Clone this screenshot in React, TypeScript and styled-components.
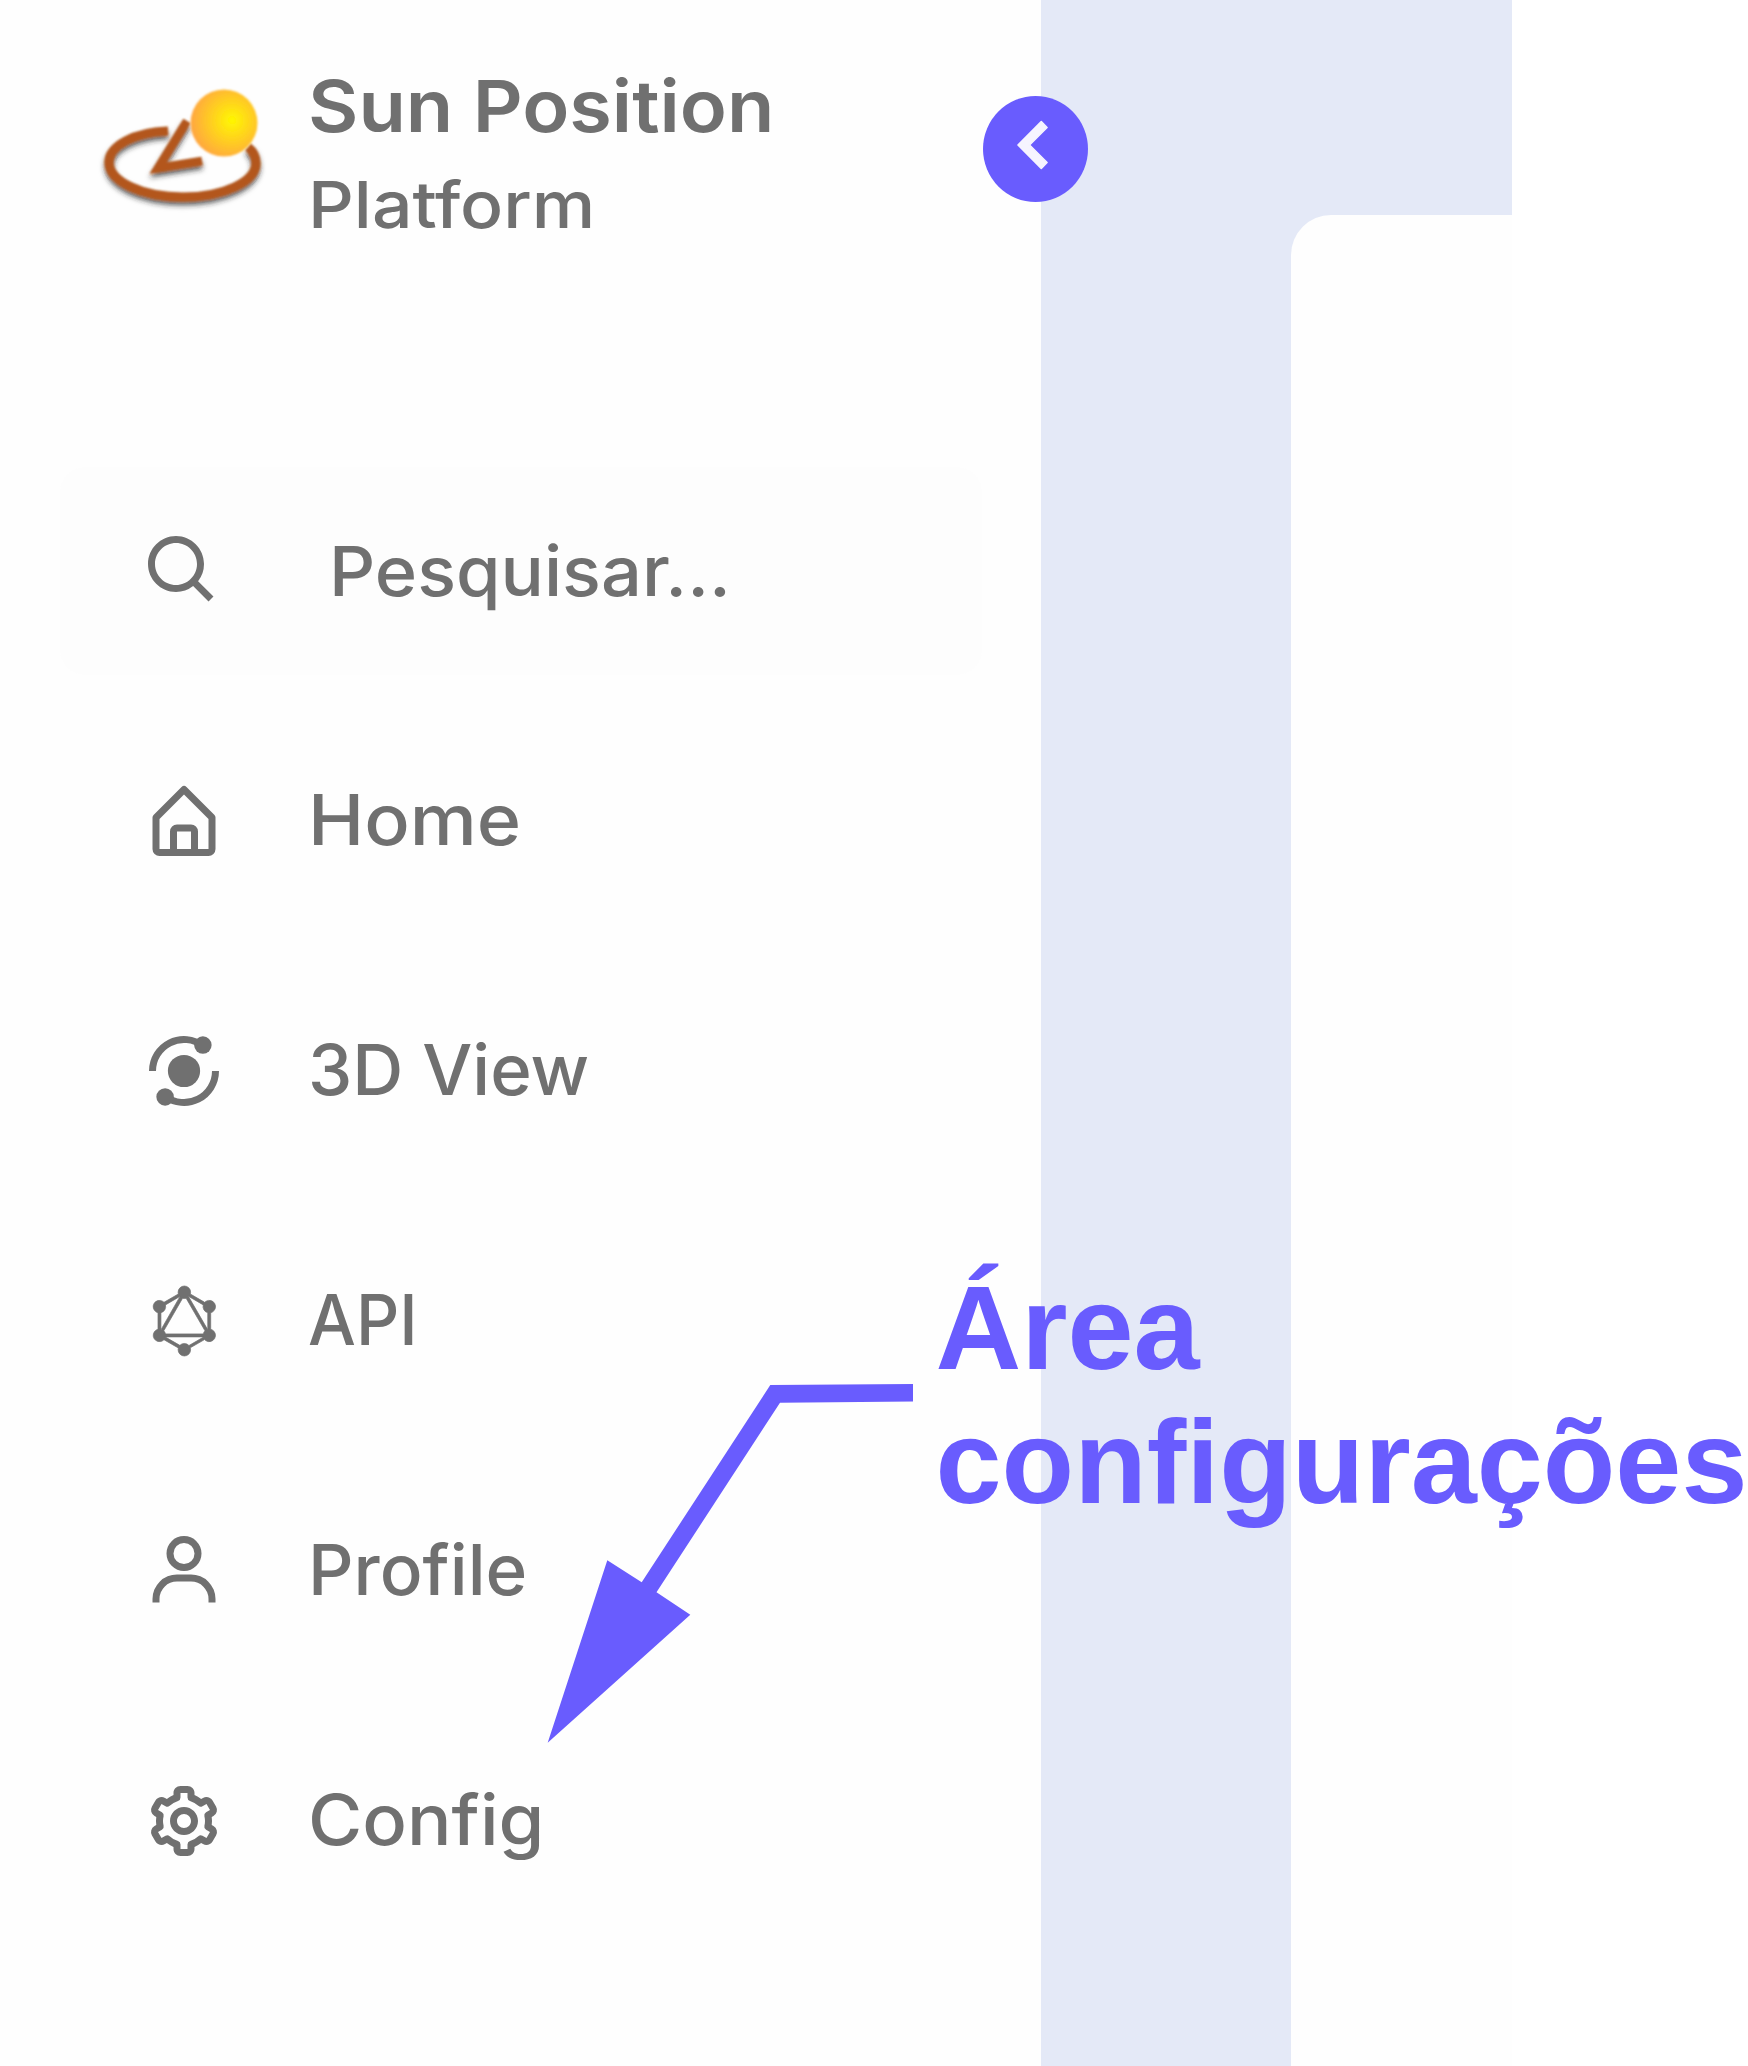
import React from "react";
import styled, { createGlobalStyle } from "styled-components";
import {
  BiChevronLeft,
  BiCog,
  BiLogoGraphql,
  BiSearch,
  BiUser,
} from "react-icons/bi";

const accent = "#695cfe";
const ink = "#707070";

const GlobalStyle = createGlobalStyle`
  * { box-sizing: border-box; }
  body { margin: 0; background: #fff; }
`;

const Page = styled.div`
  position: relative;
  display: flex;
  width: 1748px;
  height: 2066px;
  overflow: hidden;
  background: #fff;
  font-family: Inter, "Open Sans", sans-serif;
  color: ${ink};
`;

const Sidebar = styled.nav`
  position: relative;
  flex: none;
  width: 1041px;
  padding: 64px 59px 0 60px;
  background: #fefefe;
`;

const Header = styled.header`
  display: flex;
  height: 186px;
  padding-left: 40px;
`;

const Logo = styled.svg`
  flex: none;
  width: 180px;
  height: 135px;
  margin: 16px 33px 0 -5px;
`;

const Titles = styled.div`
  display: flex;
  flex-direction: column;
  gap: 15px;
`;

const Label = styled.span<{ $size: number; $stretch: number; $weight?: number }>`
  font-size: ${(p) => p.$size}px;
  font-weight: ${(p) => p.$weight ?? 500};
  line-height: 84px;
  white-space: nowrap;
  transform: scaleX(${(p) => p.$stretch});
  transform-origin: left center;
`;

const Toggle = styled.button`
  position: absolute;
  top: 96px;
  right: -47px;
  display: grid;
  place-items: center;
  width: 105px;
  height: 106px;
  padding: 0 0 8px;
  border: 0;
  border-radius: 50%;
  background: ${accent};
  color: #f6f4ff;
  z-index: 1;
`;

const Search = styled.div`
  display: flex;
  align-items: center;
  height: 208px;
  margin-top: 217px;
  padding-left: 81px;
  gap: 104px;
  border-radius: 25px;
  background: #fdfdfd;
`;

const Menu = styled.ul`
  display: flex;
  flex-direction: column;
  margin: 42px 0 0;
  padding: 0;
  list-style: none;
`;

const Item = styled.li`
  display: flex;
  align-items: center;
  height: 208px;
  margin-bottom: 42px;
  padding-left: 81.5px;
  gap: 82.5px;

  ${() => Label} {
    padding-bottom: 2px;
  }
`;

const SearchLabel = styled(Label)`
  padding-bottom: 1px;
`;

const Content = styled.main`
  display: flex;
  flex: none;
  width: 471px;
  padding: 215px 0 0 250px;
  background: #e4e9f7;
`;

const Panel = styled.section`
  flex: 1;
  border-top-left-radius: 40px;
  background: #fefefe;
`;

const Arrow = styled.svg`
  position: absolute;
  left: 540px;
  top: 1376px;
  width: 380px;
  height: 374px;
  z-index: 2;
`;

const Note = styled.p`
  position: absolute;
  left: 935.5px;
  top: 1260.5px;
  margin: 0;
  color: ${accent};
  font: 700 118.8px/134px "Liberation Sans", Arial, sans-serif;
  z-index: 2;
`;

type IconProps = { size?: number };

function HomeIcon({ size }: IconProps) {
  return (
    <svg width={size} height={size} viewBox="0 0 24 24" fill="currentColor">
      <path d="M5 22h14a2 2 0 0 0 2-2v-9a1 1 0 0 0-.29-.71l-8-8a1 1 0 0 0-1.41 0l-8 8A1 1 0 0 0 3 11v9a2 2 0 0 0 2 2zm5-2v-5h4v5zm-5-8.59 7-7 7 7V20h-3v-5a2 2 0 0 0-2-2h-4a2 2 0 0 0-2 2v5H5z" />
    </svg>
  );
}

function OrbitIcon({ size }: IconProps) {
  return (
    <svg width={size} height={size} viewBox="0 0 24 24">
      <path
        d="M3 12a9 9 0 0 1 14.4-7.2M21 12a9 9 0 0 1-14.4 7.2"
        fill="none"
        stroke="currentColor"
        strokeWidth="2"
      />
      <g fill="currentColor">
        <circle cx="12" cy="12" r="4.6" />
        <circle cx="17.4" cy="4.6" r="2.5" />
        <circle cx="6.6" cy="19.4" r="2.5" />
      </g>
    </svg>
  );
}

function GraphIcon({ size }: IconProps) {
  return <BiLogoGraphql size={size} strokeWidth={0.2} />;
}

const items: { icon: React.ComponentType<IconProps>; text: string; stretch: number }[] = [
  { icon: HomeIcon, text: "Home", stretch: 1.078 },
  { icon: OrbitIcon, text: "3D View", stretch: 1.01 },
  { icon: GraphIcon, text: "API", stretch: 0.965 },
  { icon: BiUser, text: "Profile", stretch: 1.015 },
  { icon: BiCog, text: "Config", stretch: 1.058 },
];

function SunLogo() {
  return (
    <Logo viewBox="95 80 180 135">
      <defs>
        <radialGradient id="sun" cx="0.62" cy="0.46" r="0.62">
          <stop offset="0" stopColor="#fff800" />
          <stop offset="1" stopColor="#ffa640" />
        </radialGradient>
        <filter id="shade" x="-10%" y="-10%" width="120%" height="135%">
          <feGaussianBlur in="SourceGraphic" stdDeviation="1" result="soft" />
          <feDropShadow in="soft" dx="0" dy="4" stdDeviation="2.8" floodColor="#222" floodOpacity="0.7" />
        </filter>
        <filter id="glow">
          <feGaussianBlur stdDeviation="1" />
        </filter>
      </defs>
      <g fill="none" stroke="#b3561c" strokeWidth="9" filter="url(#shade)">
        <path d="M168 131 C134 132 109 146 109 162 C109 181 141 197 183 197 C225 197 256 181 256 163 C256 156 253 151 248 147" />
        <path d="M187 121 L158 168 L202 161" strokeWidth="8.5" />
      </g>
      <circle cx="224" cy="123" r="33.5" fill="url(#sun)" filter="url(#glow)" />
    </Logo>
  );
}

export default function App() {
  return (
    <>
      <GlobalStyle />
      <Page>
        <Sidebar>
          <Header>
            <SunLogo />
            <Titles>
              <Label $size={72} $stretch={1.076} $weight={600}>Sun Position</Label>
              <Label $size={65} $stretch={1.1}>Platform</Label>
            </Titles>
          </Header>
          <Toggle aria-label="Recolher">
            <BiChevronLeft size={98} strokeWidth={0.4} strokeLinejoin="round" />
          </Toggle>
          <Search>
            <BiSearch size={84} />
            <SearchLabel $size={69} $stretch={1.045}>Pesquisar...</SearchLabel>
          </Search>
          <Menu>
            {items.map(({ icon: Icon, text, stretch }) => (
              <Item key={text}>
                <Icon size={84} />
                <Label $size={70} $stretch={stretch}>{text}</Label>
              </Item>
            ))}
          </Menu>
        </Sidebar>
        <Content>
          <Panel />
        </Content>
        <Arrow viewBox="540 1376 380 374" fill={accent}>
          <path d="M770.3 1385 L913 1384 V1401.5 L780 1402.7 L656.5 1592.3 L690.3 1614.7 L547.7 1742.7 L607.3 1560.3 L641.7 1582.3 Z" />
        </Arrow>
        <Note>
          Área
          <br />
          configurações
        </Note>
      </Page>
    </>
  );
}
